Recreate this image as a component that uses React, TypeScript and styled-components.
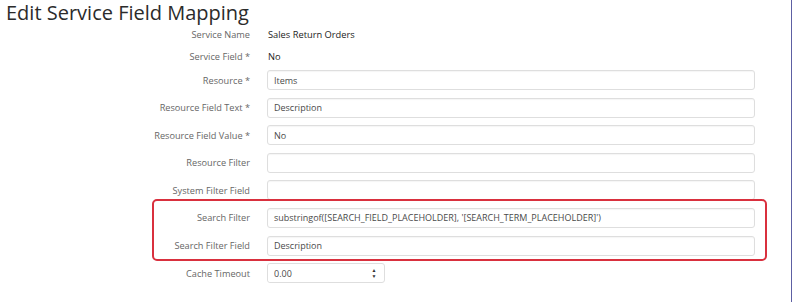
import React from "react";
import styled, { createGlobalStyle } from "styled-components";

const GlobalStyle = createGlobalStyle`
  html, body {
    margin: 0;
    padding: 0;
    background: #ffffff;
  }
  body {
    font-family: "Open Sans", "Noto Sans", "Liberation Sans", sans-serif;
  }
  * {
    box-sizing: border-box;
  }
`;

const FIELDS = [
  { label: "Resource *", value: "Items" },
  { label: "Resource Field Text *", value: "Description" },
  { label: "Resource Field Value *", value: "No" },
  { label: "Resource Filter", value: "" },
  { label: "System Filter Field", value: "" },
];

const HIGHLIGHTED = [
  {
    label: "Search Filter",
    value: "substringof([SEARCH_FIELD_PLACEHOLDER], '[SEARCH_TERM_PLACEHOLDER]')",
  },
  { label: "Search Filter Field", value: "Description" },
];

function App() {
  return (
    <Page>
      <GlobalStyle />
      <Title>Edit Service Field Mapping</Title>
      <Form>
        <StaticRow $gap={6}>
          <Label>Service Name</Label>
          <StaticValue>Sales Return Orders</StaticValue>
        </StaticRow>
        <StaticRow $gap={6}>
          <Label>Service Field *</Label>
          <StaticValue>No</StaticValue>
        </StaticRow>
        {FIELDS.map((f) => (
          <Row key={f.label}>
            <Label>{f.label}</Label>
            <TextInput readOnly value={f.value} />
          </Row>
        ))}
        <Highlight>
          {HIGHLIGHTED.map((f) => (
            <Row key={f.label}>
              <Label>{f.label}</Label>
              <TextInput readOnly value={f.value} />
            </Row>
          ))}
        </Highlight>
        <Row>
          <Label>Cache Timeout</Label>
          <NumberBox>
            <NumberInput readOnly value="0.00" />
            <Spinner>
              <Arrow>▲</Arrow>
              <Arrow>▼</Arrow>
            </Spinner>
          </NumberBox>
        </Row>
      </Form>
    </Page>
  );
}

export default App;

const Page = styled.div`
  width: 792px;
  height: 302px;
  border-right: 1px solid #5d60a3;
  overflow: hidden;
`;
const Title = styled.h1`
  margin: 0;
  height: 26px;
  padding-left: 6px;
  color: #2b2b2b;
  font-size: 20px;
  font-weight: 400;
  line-height: 25px;
`;
const Form = styled.div`
  display: flex;
  flex-direction: column;
  width: 755px;
`;
const Row = styled.div`
  display: grid;
  grid-template-columns: 1fr 488px;
  column-gap: 17px;
  align-items: center;
  height: 20px;
  margin-bottom: 7.6px;
`;
const StaticRow = styled(Row)<{ $gap: number }>`
  height: 16px;
  margin-bottom: ${(p) => p.$gap}px;
`;
const Label = styled.div`
  color: #666666;
  font-size: 9.2px;
  text-align: right;
  white-space: nowrap;
`;
const StaticValue = styled.div`
  color: #222222;
  font-size: 9.3px;
  padding-left: 1px;
`;
const TextInput = styled.input`
  width: 100%;
  height: 20px;
  padding: 0 6px;
  border: 1px solid #dedede;
  border-radius: 3px;
  box-shadow: inset 0 1px 1px rgba(0, 0, 0, 0.04);
  color: #4a4a4a;
  font-family: inherit;
  font-size: 9px;
  outline: none;
`;
const Highlight = styled.div`
  margin: -8.6px -12px -5.6px 152px;
  padding: 6.6px 10px 3.6px 0;
  border: 2px solid #d9303e;
  border-radius: 5px;
  & > div:last-child {
    margin-bottom: 0;
  }
  & + div {
    margin-top: 7.6px;
  }
`;
const NumberBox = styled.div`
  display: flex;
  align-items: center;
  width: 118px;
  height: 20px;
  border: 1px solid #dedede;
  border-radius: 3px;
`;
const NumberInput = styled(TextInput)`
  flex: 1;
  min-width: 0;
  height: 18px;
  border: none;
  box-shadow: none;
`;
const Spinner = styled.div`
  display: flex;
  flex-direction: column;
  align-items: center;
  width: 12px;
  margin-right: 4px;
`;
const Arrow = styled.span`
  color: #333333;
  font-size: 5px;
  line-height: 6px;
`;
